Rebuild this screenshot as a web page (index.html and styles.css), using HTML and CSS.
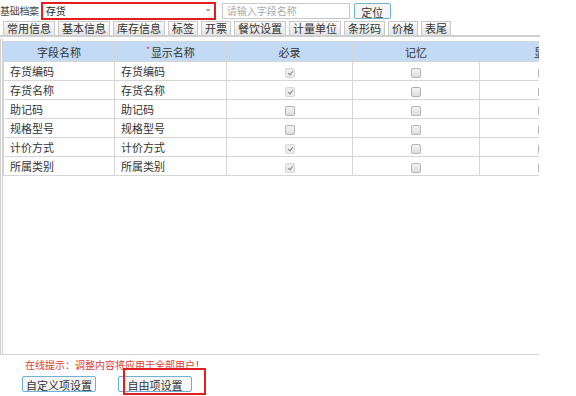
FILE: index.html
```html
<!DOCTYPE html>
<html lang="zh-CN">
<head>
    <meta charset="UTF-8">
    <title>基础档案</title>
    <link rel="stylesheet" href="styles.css">
</head>
<body>
    <div class="toolbar">
        <span class="label">基础档案</span>
        <div class="select">存货<span class="arrow">⌄</span></div>
        <div class="search">请输入字段名称</div>
        <button class="btn-locate">定位</button>
    </div>

    <div class="tabs">
        <span class="tab">常用信息</span>
        <span class="tab">基本信息</span>
        <span class="tab">库存信息</span>
        <span class="tab">标签</span>
        <span class="tab">开票</span>
        <span class="tab">餐饮设置</span>
        <span class="tab">计量单位</span>
        <span class="tab">条形码</span>
        <span class="tab">价格</span>
        <span class="tab">表尾</span>
    </div>

    <div class="panel">
        <table class="grid">
            <colgroup>
                <col style="width: 111px">
                <col style="width: 112px">
                <col style="width: 126px">
                <col style="width: 127px">
                <col style="width: 127px">
            </colgroup>
            <thead>
                <tr>
                    <th>字段名称</th>
                    <th><span class="req">*</span>显示名称</th>
                    <th>必录</th>
                    <th>记忆</th>
                    <th class="edge">显示</th>
                </tr>
            </thead>
            <tbody>
                <tr><td>存货编码</td><td>存货编码</td><td class="c"><span class="cb on"></span></td><td class="c"><span class="cb"></span></td><td class="c"><span class="cb"></span></td></tr>
                <tr><td>存货名称</td><td>存货名称</td><td class="c"><span class="cb on"></span></td><td class="c"><span class="cb"></span></td><td class="c"><span class="cb"></span></td></tr>
                <tr><td>助记码</td><td>助记码</td><td class="c"><span class="cb"></span></td><td class="c"><span class="cb"></span></td><td class="c"><span class="cb"></span></td></tr>
                <tr><td>规格型号</td><td>规格型号</td><td class="c"><span class="cb"></span></td><td class="c"><span class="cb"></span></td><td class="c"><span class="cb"></span></td></tr>
                <tr><td>计价方式</td><td>计价方式</td><td class="c"><span class="cb on"></span></td><td class="c"><span class="cb"></span></td><td class="c"><span class="cb"></span></td></tr>
                <tr><td>所属类别</td><td>所属类别</td><td class="c"><span class="cb on"></span></td><td class="c"><span class="cb"></span></td><td class="c"><span class="cb"></span></td></tr>
            </tbody>
        </table>
    </div>

    <p class="tip">在线提示：调整内容将应用于全部用户！</p>
    <div class="actions">
        <button class="btn">自定义项设置</button>
        <button class="btn">自由项设置</button>
        <span class="mark"></span>
    </div>
</body>
</html>
```

FILE: styles.css
```css
body {
    margin: 0;
    font-family: "Noto Sans CJK SC", "DejaVu Sans", sans-serif;
    font-size: 11px;
    color: #333;
    background: #fff;
    position: relative;
    height: 396px;
    overflow: hidden;
}

/* Top toolbar */
.toolbar {
    display: flex;
    align-items: center;
    height: 21px;
}

.label {
    font-size: 10px;
    color: #444;
    letter-spacing: -0.3px;
}

.select {
    position: relative;
    width: 168px;
    height: 14px;
    line-height: 14px;
    margin-left: 2px;
    padding-left: 3px;
    border: 2px solid #e41e1e;
    font-size: 10px;
    color: #222;
}

.arrow {
    position: absolute;
    right: 2px;
    top: -3px;
    font-size: 9px;
    color: #555;
}

.search {
    width: 122px;
    height: 14px;
    line-height: 14px;
    margin-left: 6px;
    padding-left: 4px;
    border: 1px solid #c8c8c8;
    color: #aaa;
    font-size: 10px;
}

.btn-locate {
    margin-left: 4px;
    width: 37px;
    height: 16px;
    padding: 0;
    font-family: inherit;
    font-size: 11px;
    color: #333;
    background: #f5f5f5;
    border: 1px solid #6fb3d2;
    border-radius: 2px;
}

/* Tabs */
.tabs {
    display: flex;
    gap: 3px;
    width: 537px;
    padding-left: 3px;
    border-bottom: 2px solid #cfcfcf;
}

.tab {
    height: 13px;
    line-height: 13px;
    padding: 0 3px;
    font-size: 11px;
    color: #333;
    background: linear-gradient(#fbfbfb, #e4e4e4);
    border: 1px solid #c9c9c9;
    border-bottom: none;
}

/* Grid panel */
.panel {
    width: 536px;
    height: 313px;
    margin-top: 2px;
    padding-top: 2px;
    border-left: 3px double #d0d0d0;
    border-bottom: 1px solid #d4d4d4;
    overflow: hidden;
}

.grid {
    border-collapse: collapse;
    table-layout: fixed;
    width: 603px;
}

.grid th,
.grid td {
    height: 18px;
    padding: 0 6px;
    border: 1px solid #d6d6d6;
    font-size: 11px;
    white-space: nowrap;
    overflow: hidden;
}

.grid th {
    height: 19px;
    background: #c2daf4;
    font-weight: normal;
    color: #333;
    text-align: center;
}

.grid th.edge {
    text-align: left;
    padding-left: 54px;
}

.grid td {
    color: #333;
}

.grid td.c {
    text-align: center;
}

.req {
    color: #e0245e;
    font-size: 8px;
    vertical-align: top;
    margin-right: 1px;
}

.cb {
    display: inline-block;
    position: relative;
    width: 8px;
    height: 8px;
    border: 1px solid #b4b4b4;
    border-radius: 2px;
    background: linear-gradient(#f4f4f4, #dedede);
    vertical-align: middle;
}

.cb.on {
    border-color: #d8d8d8;
    background: #ececec;
}

.cb.on::after {
    content: "";
    position: absolute;
    left: 3px;
    top: 1px;
    width: 2px;
    height: 4px;
    border: solid #888;
    border-width: 0 1px 1px 0;
    transform: rotate(40deg);
}

/* Bottom */
.tip {
    margin: 4px 0 0 25px;
    font-size: 10px;
    color: #e03c31;
    line-height: 12px;
}

.actions {
    display: flex;
    gap: 22px;
    margin: 5px 0 0 22px;
}

.btn {
    width: 74px;
    height: 16px;
    padding: 0;
    font-family: inherit;
    font-size: 11px;
    color: #333;
    background: #f7f7f7;
    border: 1px solid #6fb3d2;
    border-radius: 2px;
}

/* Red highlight annotation */
.mark {
    position: absolute;
    left: 123px;
    top: 368px;
    width: 79px;
    height: 23px;
    border: 2px solid #e41e1e;
}
```
